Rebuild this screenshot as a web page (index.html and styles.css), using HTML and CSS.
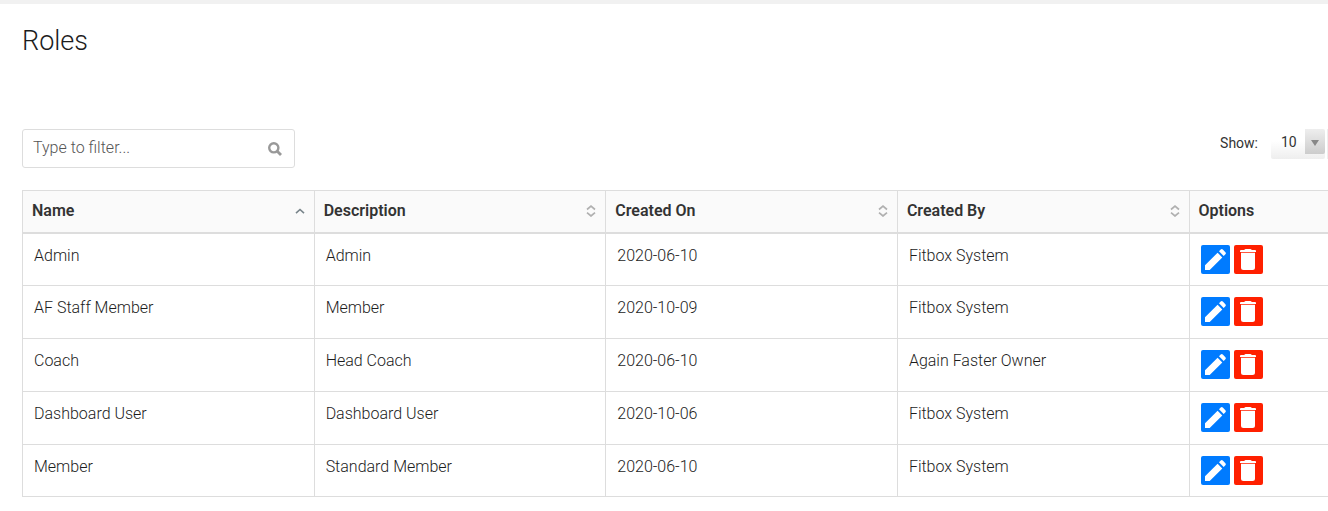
FILE: index.html
```
<!DOCTYPE html>
<html lang="en">
<head>
<meta charset="utf-8">
<title>Roles</title>
<link rel="stylesheet" href="styles.css">
</head>
<body>
<svg class="sprite" aria-hidden="true">
  <symbol id="pencil" viewBox="0 0 29 29"><path fill="#fff" d="M4 20.300 16.600 7.700l4.700 4.700L8.700 25H4zM18 6.300l1.700-1.700a1.500 1.500 0 0 1 2.100 0l2.600 2.600a1.500 1.500 0 0 1 0 2.100L22.700 11z"/></symbol>
  <symbol id="trash" viewBox="0 0 29 29"><path fill="#fff" d="M6 7V6a1 1 0 0 1 1-1h3l1.500-1h5L18 5h3a1 1 0 0 1 1 1v1zM7 7.800h14v14.700a2.500 2.500 0 0 1-2.500 2.500h-9A2.500 2.500 0 0 1 7 22.500z"/></symbol>
  <symbol id="sort" viewBox="0 0 10 12"><path fill="none" stroke="#b0b0b0" stroke-width="1.700" d="M1 4.500 5 1.200l4 3.300M1 7.700 5 11l4-3.300"/></symbol>
  <symbol id="ascending" viewBox="0 0 10 12"><path fill="none" stroke="#78848a" stroke-width="1.600" d="M1 8.200 5 4.500l4 3.700"/></symbol>
</svg>
<main class="page">
  <h1 class="title">Roles</h1>
  <div class="toolbar">
    <div class="filter">
      <input class="filter-input" type="text" placeholder="Type to filter..." aria-label="Filter roles">
      <svg class="filter-icon" viewBox="0 0 14 14" aria-hidden="true"><circle cx="5.800" cy="5.800" r="4.600" fill="none" stroke="#999" stroke-width="2.400"/><path d="m9 9 4 4" stroke="#999" stroke-width="2.800"/></svg>
    </div>
    <div class="length">
      <label for="show">Show:</label>
      <span class="select-box">
        <select id="show" class="select"><option>10</option><option>25</option><option>50</option></select>
        <span class="arrow"><svg width="8" height="6" viewBox="0 0 8 6" aria-hidden="true"><path fill="#888" d="M0 0h8L4 6z"/></svg></span>
      </span>
      <span class="edge"></span>
    </div>
  </div>
  <table class="roles">
    <thead>
      <tr>
        <th><button class="sort">Name<svg class="sort-icon"><use href="#ascending"/></svg></button></th>
        <th><button class="sort">Description<svg class="sort-icon"><use href="#sort"/></svg></button></th>
        <th><button class="sort">Created On<svg class="sort-icon"><use href="#sort"/></svg></button></th>
        <th><button class="sort">Created By<svg class="sort-icon"><use href="#sort"/></svg></button></th>
        <th class="options">Options</th>
      </tr>
    </thead>
    <tbody>
      <tr><td>Admin</td><td>Admin</td><td>2020-06-10</td><td>Fitbox System</td><td><div class="actions"><button class="action edit" aria-label="Edit"><svg><use href="#pencil"/></svg></button><button class="action delete" aria-label="Delete"><svg><use href="#trash"/></svg></button></div></td></tr>
      <tr><td>AF Staff Member</td><td>Member</td><td>2020-10-09</td><td>Fitbox System</td><td><div class="actions"><button class="action edit" aria-label="Edit"><svg><use href="#pencil"/></svg></button><button class="action delete" aria-label="Delete"><svg><use href="#trash"/></svg></button></div></td></tr>
      <tr><td>Coach</td><td>Head Coach</td><td>2020-06-10</td><td>Again Faster Owner</td><td><div class="actions"><button class="action edit" aria-label="Edit"><svg><use href="#pencil"/></svg></button><button class="action delete" aria-label="Delete"><svg><use href="#trash"/></svg></button></div></td></tr>
      <tr><td>Dashboard User</td><td>Dashboard User</td><td>2020-10-06</td><td>Fitbox System</td><td><div class="actions"><button class="action edit" aria-label="Edit"><svg><use href="#pencil"/></svg></button><button class="action delete" aria-label="Delete"><svg><use href="#trash"/></svg></button></div></td></tr>
      <tr><td>Member</td><td>Standard Member</td><td>2020-06-10</td><td>Fitbox System</td><td><div class="actions"><button class="action edit" aria-label="Edit"><svg><use href="#pencil"/></svg></button><button class="action delete" aria-label="Delete"><svg><use href="#trash"/></svg></button></div></td></tr>
    </tbody>
  </table>
</main>
</body>
</html>
```
FILE: styles.css
```
* { box-sizing: border-box; }
body {
  margin: 0;
  background: #fff;
  color: #1c1c1c;
  font: 300 16px/22px Roboto, sans-serif;
}
button, input, select { font: inherit; color: inherit; }
.sprite { display: none; }
.page {
  border-top: 4px solid #f1f1f1;
  padding: 17px 0 0 22px;
}
.title {
  margin: 0 0 68px;
  font-size: 27px;
  line-height: 40px;
  font-weight: 300;
}
.toolbar {
  display: flex;
  justify-content: space-between;
  align-items: flex-start;
  margin-bottom: 22px;
}
.filter {
  display: flex;
  align-items: center;
  width: 273px;
  height: 39px;
  padding: 0 12px 0 10px;
  border: 1px solid #ddd;
  border-radius: 3px;
}
.filter-input {
  flex: 1;
  min-width: 0;
  padding: 0 0 2px;
  border: 0;
  outline: 0;
  background: none;
}
.filter-input::placeholder { color: #555; opacity: 1; }
.filter-icon { width: 14px; height: 14px; }
.length {
  display: flex;
  align-items: center;
  color: #333;
  font-size: 14px;
  font-weight: 400;
}
.length label { margin-right: 13px; padding-bottom: 2px; }
.select-box {
  display: grid;
  grid-template-columns: 34px 20px;
  height: 30px;
  border-radius: 2px;
  background: linear-gradient(#fff 40%, #eee);
}
.select {
  grid-area: 1 / 1 / 2 / 3;
  appearance: none;
  border: 0;
  background: none;
  padding: 0 0 4px 10px;
}
.arrow {
  grid-area: 1 / 2;
  display: flex;
  align-items: center;
  justify-content: center;
  height: 25px;
  padding-top: 2px;
  background: linear-gradient(#eee, #ccc);
  border-radius: 0 2px 2px 0;
  pointer-events: none;
}
.edge { width: 1px; height: 30px; margin-left: 2px; background: #eee; }
.roles {
  width: 100%;
  table-layout: fixed;
  border-collapse: separate;
  border-spacing: 0;
  border-top: 1px solid #ddd;
}
.roles th, .roles td {
  border: 0 solid #ddd;
  border-width: 0 0 1px 1px;
  text-align: left;
  vertical-align: top;
}
.roles th {
  width: 22.33%;
  height: 43px;
  padding: 9px;
  border-bottom-width: 2px;
  background: #fafafa;
  color: #333;
  font-weight: 600;
}
.roles th.options { width: auto; }
.sort {
  display: flex;
  align-items: center;
  justify-content: space-between;
  width: 100%;
  padding: 0;
  border: 0;
  background: none;
}
.sort-icon { width: 10px; height: 12px; }
.roles td { padding: 11px 11px 12px; }
.roles tr:first-child td, .roles tr:last-child td { padding-bottom: 11px; }
.actions { display: flex; gap: 4px; }
.action {
  width: 29px;
  height: 29px;
  padding: 0;
  border: 0;
  border-radius: 2px;
}
.action svg { display: block; width: 29px; height: 29px; }
.edit { background: #007bff; }
.delete { background: #ff2000; }
```
